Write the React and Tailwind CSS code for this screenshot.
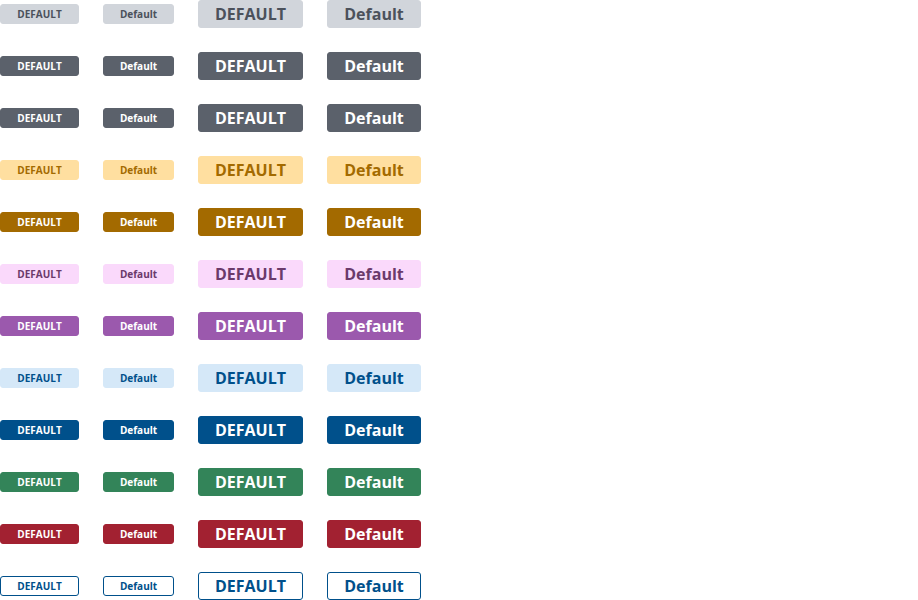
import React from 'react';

const variants = [
  { name: 'gray-light', cls: 'bg-[#d1d5db] border-[#d1d5db] text-[#4b515b]' },
  { name: 'gray', cls: 'bg-[#5b616b] border-[#5b616b] text-white' },
  { name: 'gray-2', cls: 'bg-[#5b616b] border-[#5b616b] text-white' },
  { name: 'orange-light', cls: 'bg-[#ffdfa0] border-[#ffdfa0] text-[#a36a00]' },
  { name: 'orange', cls: 'bg-[#a36a00] border-[#a36a00] text-white' },
  { name: 'pink-light', cls: 'bg-[#fad9fb] border-[#fad9fb] text-[#6b3a6b]' },
  { name: 'purple', cls: 'bg-[#9b59ad] border-[#9b59ad] text-white' },
  { name: 'blue-light', cls: 'bg-[#d5e8f8] border-[#d5e8f8] text-[#00508b]' },
  { name: 'blue', cls: 'bg-[#00508b] border-[#00508b] text-white' },
  { name: 'green', cls: 'bg-[#338459] border-[#338459] text-white' },
  { name: 'red', cls: 'bg-[#a22131] border-[#a22131] text-white' },
  { name: 'outline', cls: 'bg-white border-[#00508b] text-[#00508b]' },
];

// widths match the reference's rounding (text + 17px each side)
const Badge = ({ size, upper, cls }) => {
  let sizing;
  if (size === 'sm') {
    sizing = upper ? 'h-5 w-[79px] text-[10px]' : 'h-5 w-[71px] text-[10px]';
  } else {
    sizing = upper ? 'h-7 w-[105px] text-[16px]' : 'h-7 w-[94px] text-[16px]';
  }
  return (
    <span
      className={`inline-flex items-center justify-center border rounded-[3px] font-bold leading-none whitespace-nowrap ${sizing} ${cls}`}
    >
      {upper ? 'DEFAULT' : 'Default'}
    </span>
  );
};

const App = () => {
  return (
    <div className="w-[918px] h-[600px] bg-white overflow-hidden" style={{ fontFamily: '"Open Sans", sans-serif' }}>
      <div className="flex flex-col gap-6">
        {variants.map((v) => (
          <div key={v.name} className="flex items-center gap-6 h-7">
            <Badge size="sm" upper cls={v.cls} />
            <Badge size="sm" cls={v.cls} />
            <Badge size="lg" upper cls={v.cls} />
            <Badge size="lg" cls={v.cls} />
          </div>
        ))}
      </div>
    </div>
  );
};

export default App;
